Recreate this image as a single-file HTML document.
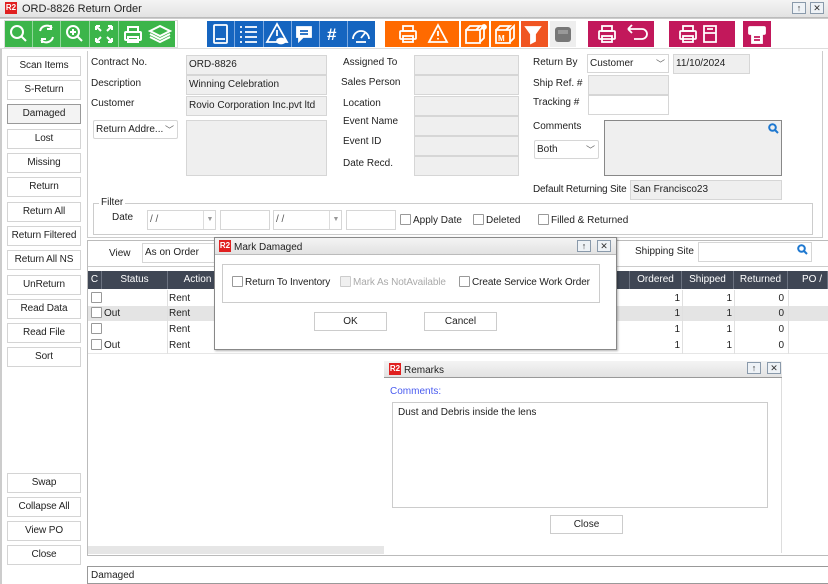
<!DOCTYPE html>
<html><head><meta charset="utf-8"><style>
*{box-sizing:border-box;margin:0;padding:0}
body{width:828px;height:584px;overflow:hidden;background:#fff;font-family:"Liberation Sans",Arial,sans-serif;font-size:10px;color:#222;position:relative}
.a{position:absolute}
.tb{background:linear-gradient(#f4f4f4,#e2e2e2);border-bottom:1px solid #bbb}
.r2{position:absolute;width:12px;height:12px;background:#e02020;color:#fff;font-size:8px;font-weight:bold;line-height:12px;text-align:center}
.wb{position:absolute;width:14px;height:12px;border:1px solid #8a9aab;background:#eef2f6;font-size:9px;line-height:10px;text-align:center;color:#333}
.btn{position:absolute;left:7px;width:74px;height:20px;border:1px solid #d4d4d4;background:#fff;text-align:center;line-height:18px;font-size:10px;white-space:nowrap;letter-spacing:-.1px}
.lb{position:absolute;font-size:10px;white-space:nowrap}
.fld{position:absolute;background:#efefef;border:1px solid #d6d6d6;height:20px;line-height:18px;padding-left:2px;font-size:10px;white-space:nowrap;overflow:hidden}
.wf{background:#fff}
.chv{position:absolute;right:3px;top:0;color:#666;font-size:9px}
.cb{display:inline-block;width:11px;height:11px;border:1px solid #999;background:#fff;vertical-align:-2px;margin-right:2px;border-radius:1px}
.th{position:absolute;top:271px;height:18px;background:#3f4654;color:#fff;text-align:center;line-height:18px;border-right:1px solid #6b7280}
.td{position:absolute;height:15px;line-height:15px;font-size:10px}
</style></head><body>
<div class="a tb" style="left:0;top:0;width:828px;height:18px"></div>
<div class="r2" style="left:5px;top:2px">R2</div>
<div class="lb" style="left:22px;top:3px;font-size:11px">ORD-8826 Return Order</div>
<div class="wb" style="left:792px;top:2px">↑</div><div class="wb" style="left:810px;top:2px">✕</div>
<div class="a" style="left:0;top:18px;width:828px;height:1px;background:#ccc"></div>
<div class="a" style="left:4px;top:20px;width:174px;height:28px;border:1px solid #ddd"></div>
<div class="a" style="left:5px;top:21px;width:170px;height:26px;background:#3cb54a"></div>
<svg class="a" style="left:5px;top:21px" width="170" height="26" fill="none" stroke="#fff" stroke-width="2">
<g stroke="#8fd99a" stroke-width="1"><line x1="27.5" y1="0" x2="27.5" y2="26"/><line x1="55.5" y1="0" x2="55.5" y2="26"/><line x1="84.5" y1="0" x2="84.5" y2="26"/><line x1="113.5" y1="0" x2="113.5" y2="26"/></g>
<circle cx="12" cy="11" r="6"/><line x1="16" y1="15" x2="21" y2="20"/>
<path d="M35 10a7 7 0 0 1 12-3M48 16a7 7 0 0 1-12 3"/><path d="M46 4v4h-4M37 22v-4h4"/>
<circle cx="68" cy="11" r="6"/><line x1="72" y1="15" x2="77" y2="20"/><path d="M65 11h6M68 8v6"/>
<path d="M91 5l5 5M91 5h4M91 5v4M107 5l-5 5M107 5h-4M107 5v4M91 21l5-5M91 21h4M91 21v-4M107 21l-5-5M107 21h-4M107 21v-4"/>
<rect x="120" y="11" width="16" height="8" rx="1"/><rect x="123" y="6" width="10" height="5"/><rect x="123" y="16" width="10" height="5"/>
<path d="M145 10l10-5 10 5-10 5z M145 13l10 5 10-5 M145 16l10 5 10-5"/>
</svg>
<div class="a" style="left:207px;top:21px;width:168px;height:26px;background:#1565c0"></div>
<svg class="a" style="left:207px;top:21px" width="168" height="26" fill="none" stroke="#fff" stroke-width="1.8">
<g stroke="#7aa8e0" stroke-width="1"><line x1="27.5" y1="0" x2="27.5" y2="26"/><line x1="56.5" y1="0" x2="56.5" y2="26"/><line x1="84.5" y1="0" x2="84.5" y2="26"/><line x1="112.5" y1="0" x2="112.5" y2="26"/><line x1="140.5" y1="0" x2="140.5" y2="26"/></g>
<rect x="7" y="4" width="13" height="18" rx="1"/><line x1="9" y1="18" x2="18" y2="18"/>
<path d="M33 6h2M33 11h2M33 16h2M33 21h2M38 6h12M38 11h12M38 16h12M38 21h12"/>
<path d="M70 3l-10 18h20z"/><path d="M70 9v6"/><ellipse cx="74" cy="20" rx="4" ry="2.5" fill="#fff"/>
<path d="M90 6h14v10h-8l-4 4v-4h-2z" fill="#fff"/><path d="M93 10h8M93 13h8" stroke="#1565c0"/>
<text x="120" y="19" fill="#fff" stroke="none" font-size="17" font-weight="bold" font-family="Liberation Sans">#</text>
<path d="M146 18a8 8 0 1 1 16 0" /><path d="M154 17l4-5"/><line x1="149" y1="21" x2="159" y2="21"/>
</svg>
<div class="a" style="left:385px;top:21px;width:74px;height:26px;background:#ff6a00"></div>
<div class="a" style="left:461px;top:21px;width:28px;height:26px;background:#ff6a00"></div>
<div class="a" style="left:491px;top:21px;width:28px;height:26px;background:#ff6a00"></div>
<div class="a" style="left:521px;top:21px;width:27px;height:26px;background:#f05522"></div>
<div class="a" style="left:550px;top:21px;width:26px;height:26px;background:#eee"></div>
<svg class="a" style="left:385px;top:21px" width="195" height="26" fill="none" stroke="#fff" stroke-width="1.8">
<rect x="15" y="10" width="16" height="8" rx="1"/><rect x="18" y="5" width="10" height="5"/><rect x="18" y="15" width="10" height="6"/>
<path d="M53 4l-9 17h18z"/><path d="M53 10v5M53 17v1.5"/>
<path d="M81 9h14v13h-14zM81 9l4-4h10l-4 4M95 9l4-4v12l-4 4"/><circle cx="99" cy="6" r="2" fill="#fff"/>
<path d="M111 9h14v13h-14zM111 9l4-4h10l-4 4M125 9l4-4v12l-4 4"/><text x="113" y="20" font-size="8" fill="#fff" stroke="none" font-weight="bold">M</text>
<path d="M141 6h14l-5 7v7l-4 2v-9z" fill="#fff"/>
<rect x="170" y="6" width="16" height="15" rx="3" fill="#777" stroke="none"/><rect x="173" y="9" width="10" height="4" fill="#999" stroke="none"/>
</svg>
<div class="a" style="left:588px;top:21px;width:66px;height:26px;background:#c2185b"></div>
<div class="a" style="left:669px;top:21px;width:66px;height:26px;background:#c2185b"></div>
<div class="a" style="left:743px;top:21px;width:28px;height:26px;background:#c2185b"></div>
<svg class="a" style="left:588px;top:21px" width="185" height="26" fill="none" stroke="#fff" stroke-width="1.8">
<rect x="11" y="10" width="16" height="8" rx="1"/><rect x="14" y="5" width="10" height="5"/><rect x="14" y="15" width="10" height="6"/>
<path d="M40 8h14a5 5 0 0 1 0 10h-8M40 8l4-4M40 8l4 4"/>
<rect x="92" y="10" width="16" height="8" rx="1"/><rect x="95" y="5" width="10" height="5"/><rect x="95" y="15" width="10" height="6"/>
<path d="M116 5h12v16h-12zM116 12h12M119 8h6"/>
<rect x="161" y="6" width="16" height="7" rx="1" fill="#fff"/><rect x="164" y="13" width="10" height="9" fill="#fff"/><path d="M166 16h6M166 19h6" stroke="#c2185b"/>
</svg>
<div class="a" style="left:0;top:48px;width:828px;height:1px;background:#ddd"></div>
<div class="a" style="left:0;top:49px;width:2px;height:535px;background:#ccc"></div>
<div class="btn" style="top:56px">Scan Items</div>
<div class="btn" style="top:80px">S-Return</div>
<div class="btn" style="top:104px;background:#f3f3f3;border-color:#999">Damaged</div>
<div class="btn" style="top:129px">Lost</div>
<div class="btn" style="top:153px">Missing</div>
<div class="btn" style="top:177px">Return</div>
<div class="btn" style="top:202px">Return All</div>
<div class="btn" style="top:226px">Return Filtered</div>
<div class="btn" style="top:250px">Return All NS</div>
<div class="btn" style="top:275px">UnReturn</div>
<div class="btn" style="top:299px">Read Data</div>
<div class="btn" style="top:323px">Read File</div>
<div class="btn" style="top:347px">Sort</div>
<div class="btn" style="top:473px">Swap</div>
<div class="btn" style="top:497px">Collapse All</div>
<div class="btn" style="top:521px">View PO</div>
<div class="btn" style="top:545px">Close</div>
<div class="a" style="left:87px;top:51px;width:736px;height:187px;border:1px solid #ccc;border-top:none"></div>
<div class="lb" style="left:91px;top:57px">Contract No.</div>
<div class="lb" style="left:91px;top:78px">Description</div>
<div class="lb" style="left:91px;top:98px">Customer</div>
<div class="fld" style="left:186px;top:55px;width:141px">ORD-8826</div>
<div class="fld" style="left:186px;top:75px;width:141px">Winning Celebration</div>
<div class="fld" style="left:186px;top:96px;width:141px">Rovio Corporation Inc.pvt ltd</div>
<div class="fld wf" style="left:93px;top:120px;width:85px;height:19px;border-radius:2px">Return Addre...<span class="chv">﹀</span></div>
<div class="fld" style="left:186px;top:120px;width:141px;height:56px"></div>
<div class="lb" style="left:343px;top:57px">Assigned To</div>
<div class="lb" style="left:341px;top:77px">Sales Person</div>
<div class="lb" style="left:343px;top:98px">Location</div>
<div class="lb" style="left:343px;top:116px">Event Name</div>
<div class="lb" style="left:343px;top:136px">Event ID</div>
<div class="lb" style="left:343px;top:158px">Date Recd.</div>
<div class="fld" style="left:414px;top:55px;width:105px"></div>
<div class="fld" style="left:414px;top:75px;width:105px"></div>
<div class="fld" style="left:414px;top:96px;width:105px"></div>
<div class="fld" style="left:414px;top:116px;width:105px"></div>
<div class="fld" style="left:414px;top:136px;width:105px"></div>
<div class="fld" style="left:414px;top:156px;width:105px"></div>
<div class="lb" style="left:533px;top:57px">Return By</div>
<div class="fld wf" style="left:587px;top:54px;width:82px;height:19px">Customer<span class="chv">﹀</span></div>
<div class="fld" style="left:673px;top:54px;width:77px">11/10/2024</div>
<div class="lb" style="left:533px;top:78px">Ship Ref. #</div>
<div class="fld" style="left:588px;top:75px;width:81px"></div>
<div class="lb" style="left:533px;top:97px">Tracking #</div>
<div class="fld wf" style="left:588px;top:95px;width:81px"></div>
<div class="lb" style="left:533px;top:121px">Comments</div>
<div class="fld wf" style="left:534px;top:140px;width:65px;height:19px;border-radius:2px">Both<span class="chv">﹀</span></div>
<div class="fld" style="left:604px;top:120px;width:178px;height:56px;border:1px solid #888"></div>
<svg class="a" style="left:768px;top:123px" width="11" height="11" fill="none" stroke="#1e78d0" stroke-width="2"><circle cx="4.5" cy="4.5" r="3.3"/><line x1="7" y1="7" x2="10" y2="10"/></svg>
<div class="lb" style="left:533px;top:184px;letter-spacing:-.2px">Default Returning Site</div>
<div class="fld" style="left:630px;top:180px;width:152px">San Francisco23</div>
<div class="a" style="left:93px;top:203px;width:720px;height:32px;border:1px solid #ccc"></div>
<div class="lb" style="left:99px;top:197px;background:#fff;padding:0 2px">Filter</div>
<div class="lb" style="left:112px;top:212px">Date</div>
<div class="fld wf" style="left:147px;top:210px;width:69px;color:#555">/ /<span style="position:absolute;left:55px;top:0;height:18px;border-left:1px solid #ddd;width:13px;text-align:center;color:#999;font-size:7px">▼</span></div>
<div class="fld wf" style="left:220px;top:210px;width:50px"></div>
<div class="fld wf" style="left:273px;top:210px;width:69px;color:#555">/ /<span style="position:absolute;left:55px;top:0;height:18px;border-left:1px solid #ddd;width:13px;text-align:center;color:#999;font-size:7px">▼</span></div>
<div class="fld wf" style="left:346px;top:210px;width:50px"></div>
<div class="lb" style="left:400px;top:214px"><span class="cb"></span>Apply Date</div>
<div class="lb" style="left:473px;top:214px"><span class="cb"></span>Deleted</div>
<div class="lb" style="left:538px;top:214px"><span class="cb"></span>Filled &amp; Returned</div>
<div class="a" style="left:87px;top:240px;width:741px;height:316px;border:1px solid #bbb;border-right:none"></div>
<div class="lb" style="left:109px;top:248px">View</div>
<div class="fld wf" style="left:142px;top:243px;width:90px">As on Order</div>
<div class="lb" style="left:635px;top:246px">Shipping Site</div>
<div class="fld wf" style="left:698px;top:242px;width:114px"></div>
<svg class="a" style="left:797px;top:244px" width="11" height="11" fill="none" stroke="#1e78d0" stroke-width="2"><circle cx="4.5" cy="4.5" r="3.3"/><line x1="7" y1="7" x2="10" y2="10"/></svg>
<div class="a" style="left:88px;top:266px;width:740px;height:1px;background:#ccc"></div>
<div class="th" style="left:88px;width:14px">C</div>
<div class="th" style="left:102px;width:66px">Status</div>
<div class="th" style="left:168px;width:60px">Action</div>
<div class="th" style="left:600px;width:30px"></div>
<div class="th" style="left:630px;width:52px">Ordered</div>
<div class="th" style="left:682px;width:52px">Shipped</div>
<div class="th" style="left:734px;width:54px">Returned</div>
<div class="th" style="left:788px;width:40px;text-align:left;padding-left:14px">PO / T</div>
<div class="a" style="left:88px;top:306px;width:740px;height:15px;background:#e4e4e4"></div>
<div class="a" style="left:88px;top:290px;width:740px;height:64px;border-bottom:1px solid #e6e6e6"></div>
<div class="td" style="left:91px;top:291px"><span class="cb"></span></div>
<div class="td" style="left:91px;top:306px"><span class="cb"></span></div>
<div class="td" style="left:91px;top:322px"><span class="cb"></span></div>
<div class="td" style="left:91px;top:338px"><span class="cb"></span>Out</div>
<div class="td" style="left:104px;top:306px">Out</div>
<div class="td" style="left:169px;top:291px">Rent</div><div class="td" style="left:169px;top:306px">Rent</div>
<div class="td" style="left:169px;top:322px">Rent</div><div class="td" style="left:169px;top:338px">Rent</div>
<div class="a" style="left:167px;top:290px;width:1px;height:64px;background:#e0e0e0"></div>
<div class="a" style="left:682px;top:290px;width:1px;height:64px;background:#e0e0e0"></div>
<div class="a" style="left:734px;top:290px;width:1px;height:64px;background:#e0e0e0"></div>
<div class="a" style="left:788px;top:290px;width:1px;height:64px;background:#e0e0e0"></div>
<div class="td" style="left:640px;top:291px;width:40px;text-align:right">1</div><div class="td" style="left:692px;top:291px;width:40px;text-align:right">1</div><div class="td" style="left:744px;top:291px;width:40px;text-align:right">0</div>
<div class="td" style="left:640px;top:306px;width:40px;text-align:right">1</div><div class="td" style="left:692px;top:306px;width:40px;text-align:right">1</div><div class="td" style="left:744px;top:306px;width:40px;text-align:right">0</div>
<div class="td" style="left:640px;top:322px;width:40px;text-align:right">1</div><div class="td" style="left:692px;top:322px;width:40px;text-align:right">1</div><div class="td" style="left:744px;top:322px;width:40px;text-align:right">0</div>
<div class="td" style="left:640px;top:338px;width:40px;text-align:right">1</div><div class="td" style="left:692px;top:338px;width:40px;text-align:right">1</div><div class="td" style="left:744px;top:338px;width:40px;text-align:right">0</div>
<div class="a" style="left:88px;top:546px;width:296px;height:8px;background:#e6e6e6"></div>
<div class="a" style="left:87px;top:566px;width:741px;height:18px;border:1px solid #999;border-right:none;padding:3px 0 0 3px;font-size:10px">Damaged</div>
<div class="a" style="left:214px;top:237px;width:403px;height:113px;background:#fff;border:1px solid #888;box-shadow:1px 1px 2px rgba(0,0,0,.3)"></div>
<div class="a tb" style="left:215px;top:238px;width:401px;height:17px"></div>
<div class="r2" style="left:219px;top:240px">R2</div>
<div class="lb" style="left:234px;top:242px">Mark Damaged</div>
<div class="wb" style="left:577px;top:240px">↑</div><div class="wb" style="left:597px;top:240px">✕</div>
<div class="a" style="left:222px;top:264px;width:378px;height:39px;border:1px solid #ccc"></div>
<div class="lb" style="left:232px;top:276px;letter-spacing:-.1px"><span class="cb"></span>Return To Inventory</div>
<div class="lb" style="left:340px;top:276px;color:#aaa;letter-spacing:-.1px"><span class="cb" style="border-color:#ccc;background:#f0f0f0"></span>Mark As NotAvailable</div>
<div class="lb" style="left:459px;top:276px;letter-spacing:-.1px"><span class="cb"></span>Create Service Work Order</div>
<div class="a" style="left:314px;top:312px;width:73px;height:19px;border:1px solid #ccc;text-align:center;line-height:17px">OK</div>
<div class="a" style="left:424px;top:312px;width:73px;height:19px;border:1px solid #ccc;text-align:center;line-height:17px">Cancel</div>
<div class="a" style="left:384px;top:361px;width:398px;height:192px;background:#fff;border-right:1px solid #ddd"></div>
<div class="a tb" style="left:384px;top:361px;width:398px;height:17px;border-bottom:1px solid #999"></div>
<div class="r2" style="left:389px;top:363px">R2</div>
<div class="lb" style="left:404px;top:365px">Remarks</div>
<div class="wb" style="left:747px;top:362px">↑</div><div class="wb" style="left:767px;top:362px">✕</div>
<div class="lb" style="left:390px;top:386px;color:#4a5cf0">Comments:</div>
<div class="a" style="left:392px;top:402px;width:376px;height:106px;border:1px solid #ccc;padding:4px 5px">Dust and Debris inside the lens</div>
<div class="a" style="left:550px;top:515px;width:73px;height:19px;border:1px solid #ccc;text-align:center;line-height:17px">Close</div>
</body></html>
